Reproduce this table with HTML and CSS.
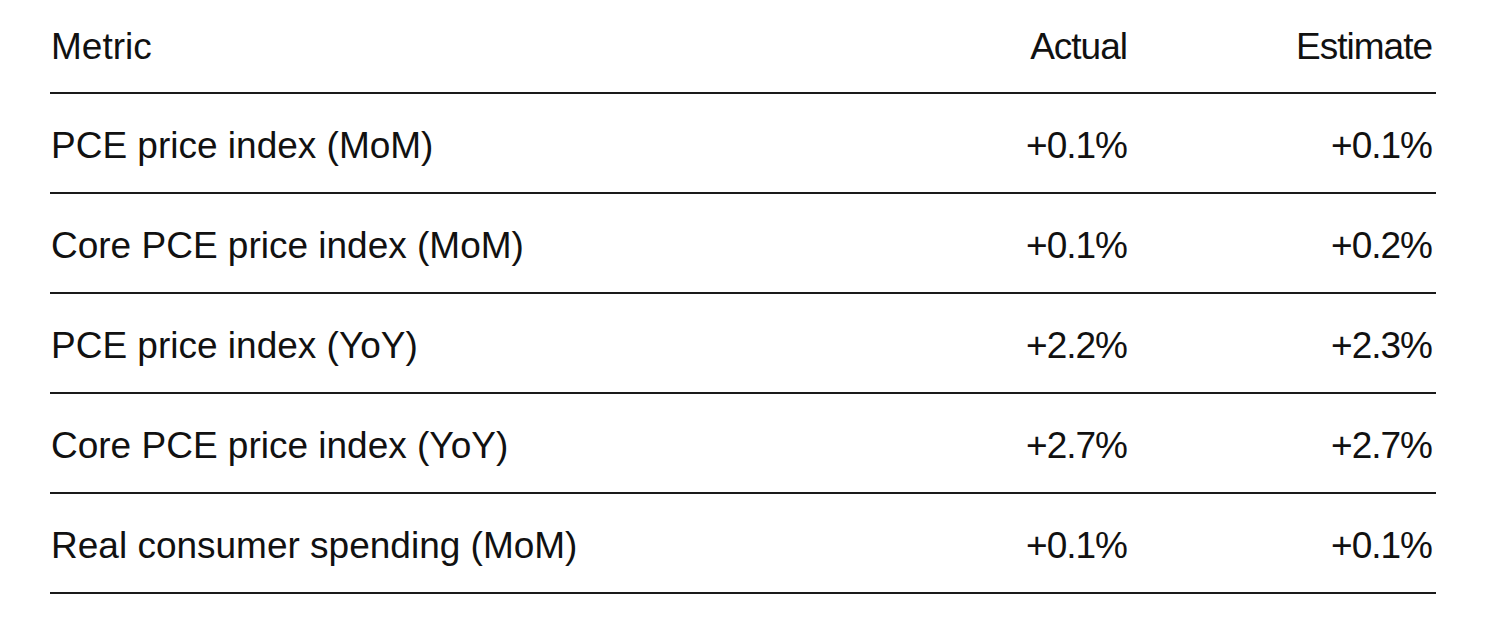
FILE: index.html
```html
<!DOCTYPE html>
<html>
<head>
<meta charset="utf-8">
<link rel="stylesheet" href="styles.css">
</head>
<body>
<div class="table">
  <div class="row head">
    <div class="c metric">Metric</div>
    <div class="c num">Actual</div>
    <div class="c num est">Estimate</div>
  </div>
  <div class="row">
    <div class="c metric">PCE price index (MoM)</div>
    <div class="c num">+0.1%</div>
    <div class="c num est">+0.1%</div>
  </div>
  <div class="row">
    <div class="c metric">Core PCE price index (MoM)</div>
    <div class="c num">+0.1%</div>
    <div class="c num est">+0.2%</div>
  </div>
  <div class="row">
    <div class="c metric">PCE price index (YoY)</div>
    <div class="c num">+2.2%</div>
    <div class="c num est">+2.3%</div>
  </div>
  <div class="row">
    <div class="c metric">Core PCE price index (YoY)</div>
    <div class="c num">+2.7%</div>
    <div class="c num est">+2.7%</div>
  </div>
  <div class="row">
    <div class="c metric">Real consumer spending (MoM)</div>
    <div class="c num">+0.1%</div>
    <div class="c num est">+0.1%</div>
  </div>
</div>
</body>
</html>
```
FILE: styles.css
```css
html, body {
  margin: 0;
  padding: 0;
  background: #ffffff;
}
body {
  font-family: "Liberation Sans", Arial, sans-serif;
  color: #111111;
}
.table {
  width: 1386px;
  margin-left: 50px;
  display: flex;
  flex-direction: column;
}
.row {
  display: grid;
  grid-template-columns: 1fr 300px 309px;
  height: 93px;
  border-bottom: 2px solid #1a1a1a;
  align-items: center;
  font-size: 37px;
  padding-top: 5px;
  box-sizing: content-box;
}
.row.head {
  height: 90px;
  padding-top: 2px;
}
.c.metric {
  padding-left: 1px;
}
.c.num {
  text-align: right;
  letter-spacing: -1px;
}
.c.est {
  padding-right: 4px;
}
```
